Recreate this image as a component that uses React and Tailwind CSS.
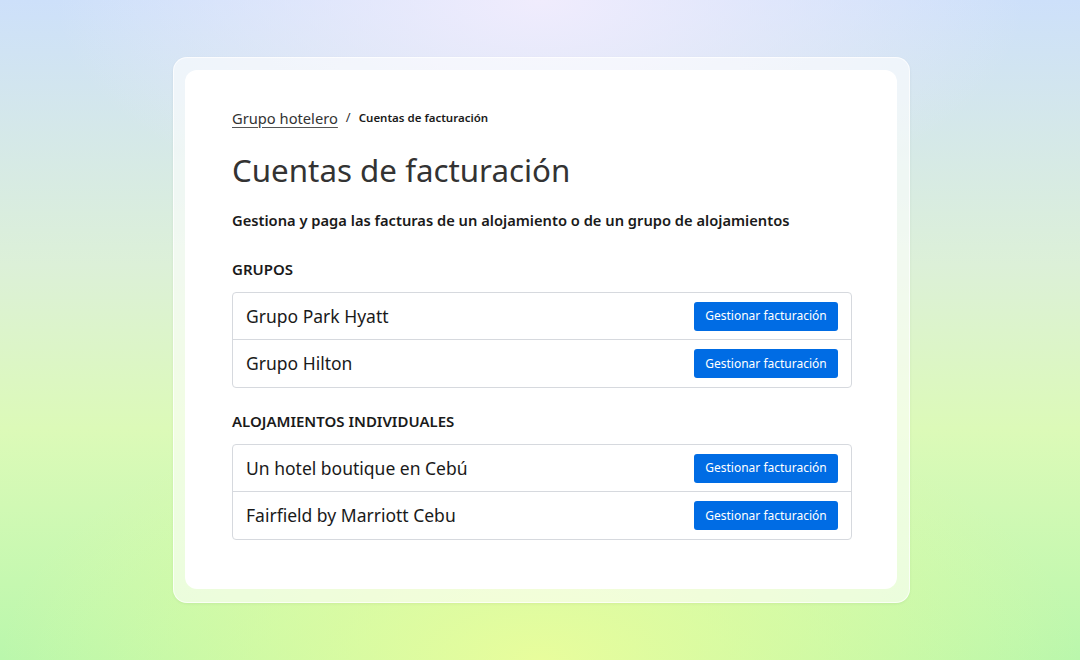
import React from 'react';

const groups = ['Grupo Park Hyatt', 'Grupo Hilton'];
const properties = ['Un hotel boutique en Cebú', 'Fairfield by Marriott Cebu'];

function AccountList({ items }) {
  return (
    <div className="rounded-[4px] border border-[#d6d9de] divide-y divide-[#d6d9de]">
      {items.map(name => (
        <div key={name} className="h-[47px] flex items-center justify-between pl-[13px] pr-[13px]">
          <span className="text-[17.5px] text-[#1a1a1a]">{name}</span>
          <button className="h-[29px] w-[144px] rounded-[3px] bg-[#006ce4] text-white text-[12px] leading-none">
            Gestionar facturación
          </button>
        </div>
      ))}
    </div>
  );
}

export default function App() {
  return (
    <div
      className="w-[1080px] h-[660px] flex items-center justify-center bg-[radial-gradient(ellipse_45%_35%_at_50%_0%,#f0ecfd_0%,rgba(240,236,253,0)_100%),radial-gradient(ellipse_50%_40%_at_50%_100%,#e8fd9c_0%,rgba(232,253,156,0)_100%),linear-gradient(180deg,#cde0fa_0%,#dcf0d8_40%,#dcfab8_65%,#baf7ac_100%)]"
      style={{ fontFamily: '"Noto Sans", sans-serif' }}
    >
      <div className="ml-[3px] w-[737px] pl-[11px] pr-[12px] pt-[12px] pb-[13px] rounded-[14px] bg-white/60 border border-white/70 shadow-[0_1px_3px_rgba(0,0,0,0.06)]">
        <div className="bg-white rounded-[12px] pl-[47px] pr-[45px] pt-[38px] pb-[49px] text-[#1a1a1a]">
          <nav className="flex items-center gap-[8px] h-[20px]">
            <a className="text-[14.7px] text-[#333] underline underline-offset-[3px] decoration-[#555]">Grupo hotelero</a>
            <span className="text-[13px] text-[#333]">/</span>
            <span className="text-[11.5px] font-semibold text-[#1a1a1a]">Cuentas de facturación</span>
          </nav>
          <h1 className="mt-[22px] text-[31.3px] leading-[40px] font-normal text-[#333]">Cuentas de facturación</h1>
          <p className="mt-[19px] text-[14.7px] leading-[22px] font-semibold">
            Gestiona y paga las facturas de un alojamiento o de un grupo de alojamientos
          </p>
          <h2 className="mt-[28px] text-[15px] leading-[20px] font-semibold">GRUPOS</h2>
          <div className="mt-[13px]">
            <AccountList items={groups} />
          </div>
          <h2 className="mt-[23px] text-[15px] leading-[20px] font-semibold">ALOJAMIENTOS INDIVIDUALES</h2>
          <div className="mt-[13px]">
            <AccountList items={properties} />
          </div>
        </div>
      </div>
    </div>
  );
}
